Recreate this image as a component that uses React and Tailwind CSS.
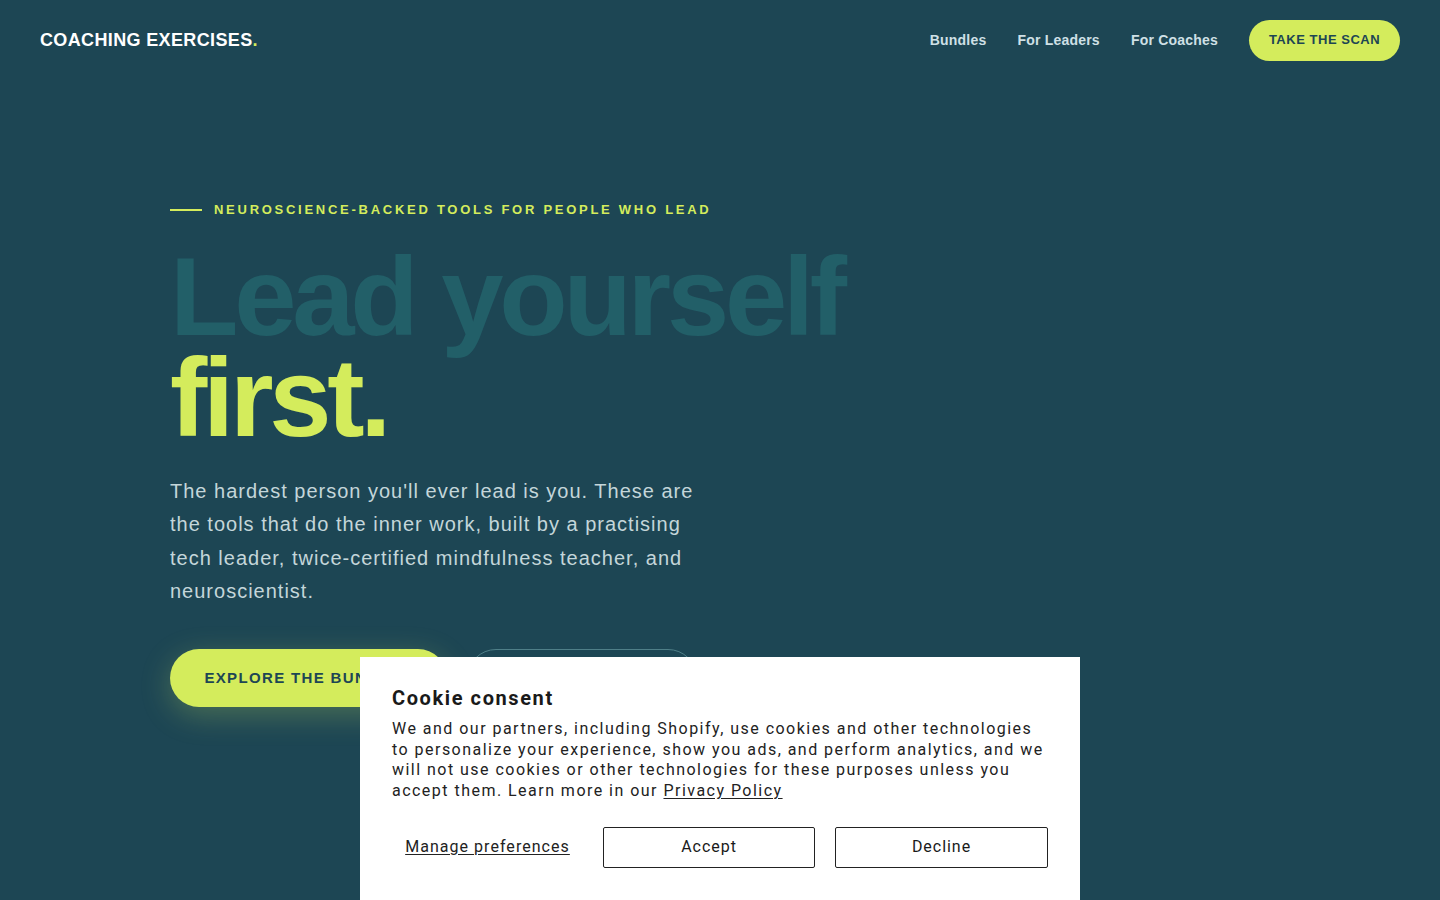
import { useState } from 'react';

// --- Cookie consent banner ---
function CookieBanner({ onClose }) {
  return (
    <div className="fixed bottom-0 left-1/2 -translate-x-1/2 w-[720px] h-[243px] bg-white px-8 pt-[28px] font-['Roboto',sans-serif] text-[#1a1a1a]">
      <h2 className="text-[20px] font-bold leading-[26px] tracking-[0.08em]">Cookie consent</h2>
      <p className="mt-[8px] text-[16px] leading-[20.7px] tracking-[0.092em] text-[#222]">
        We and our partners, including Shopify, use cookies and other technologies to personalize your
        experience, show you ads, and perform analytics, and we will not use cookies or other technologies for
        these purposes unless you accept them. Learn more in our{' '}
        <a href="#" className="underline underline-offset-2">Privacy Policy</a>
      </p>
      <div className="mt-[25px] flex items-center gap-5">
        <button className="w-[191px] text-[16px] tracking-[0.065em] underline underline-offset-2 text-[#222]">
          Manage preferences
        </button>
        <button onClick={onClose} className="w-[212px] h-[41px] border border-[#222] rounded-[2px] text-[16px] tracking-[0.06em]">
          Accept
        </button>
        <button onClick={onClose} className="w-[213px] h-[41px] border border-[#222] rounded-[2px] text-[16px] tracking-[0.06em]">
          Decline
        </button>
      </div>
    </div>
  );
}

export default function App() {
  const [showCookies, setShowCookies] = useState(true);

  return (
    <div className="min-h-screen bg-[#1d4654] font-['Liberation_Sans',Arial,sans-serif] overflow-hidden">
      {/* top bar */}
      <header className="h-20 px-10 flex items-center justify-between">
        <a href="#" className="text-[18px] font-bold text-white tracking-[0.02em]">
          COACHING EXERCISES<span className="text-[#d4ec5c]">.</span>
        </a>
        <nav className="flex items-center">
          <a href="#" className="text-[14px] font-bold tracking-[0.015em] text-[#cfe0e6]">Bundles</a>
          <a href="#" className="ml-[31px] text-[14px] font-bold tracking-[0.015em] text-[#cfe0e6]">For Leaders</a>
          <a href="#" className="ml-[31px] text-[14px] font-bold tracking-[0.015em] text-[#cfe0e6]">For Coaches</a>
          <a href="#" className="ml-[31px] h-[41px] w-[151px] flex items-center justify-center rounded-full bg-[#d4ec5c] text-[13px] font-bold tracking-[0.04em] text-[#1d4654]">
            TAKE THE SCAN
          </a>
        </nav>
      </header>

      {/* hero */}
      <section className="max-w-[1100px] mx-auto pt-[120px]">
        <div className="flex items-center gap-3">
          <span className="block w-8 h-[2px] bg-[#d4ec5c]" />
          <span className="text-[13px] font-bold tracking-[0.21em] text-[#d4ec5c]">
            NEUROSCIENCE-BACKED TOOLS FOR PEOPLE WHO LEAD
          </span>
        </div>

        <h1 className="mt-[26px] text-[112px] font-bold leading-[101px] tracking-[-0.038em]">
          <span className="block text-[#225f68]">Lead yourself</span>
          <span className="block text-[#d4ec5c]">first.</span>
        </h1>

        <p className="mt-[27px] max-w-[545px] text-[20px] leading-[33.6px] tracking-[0.05em] text-[#c4d6da]">
          The hardest person you'll ever lead is you. These are the tools that do the inner work, built by a
          practising tech leader, twice-certified mindfulness teacher, and neuroscientist.
        </p>

        <div className="mt-[40px] flex items-center gap-5">
          <a href="#" className="h-[58px] w-[277px] flex items-center justify-center rounded-full bg-[#d4ec5c] text-[15px] font-bold tracking-[0.09em] text-[#1d4654] shadow-[0_8px_30px_rgba(212,236,92,0.25)]">
            EXPLORE THE BUNDLES
          </a>
          <a href="#" className="h-[58px] w-[230px] flex items-center justify-center rounded-full border border-[#4f7f88] text-[15px] font-bold tracking-[0.09em] text-[#d3e4e8]">
            TAKE THE SCAN
          </a>
        </div>
      </section>

      {showCookies && <CookieBanner onClose={() => setShowCookies(false)} />}
    </div>
  );
}
